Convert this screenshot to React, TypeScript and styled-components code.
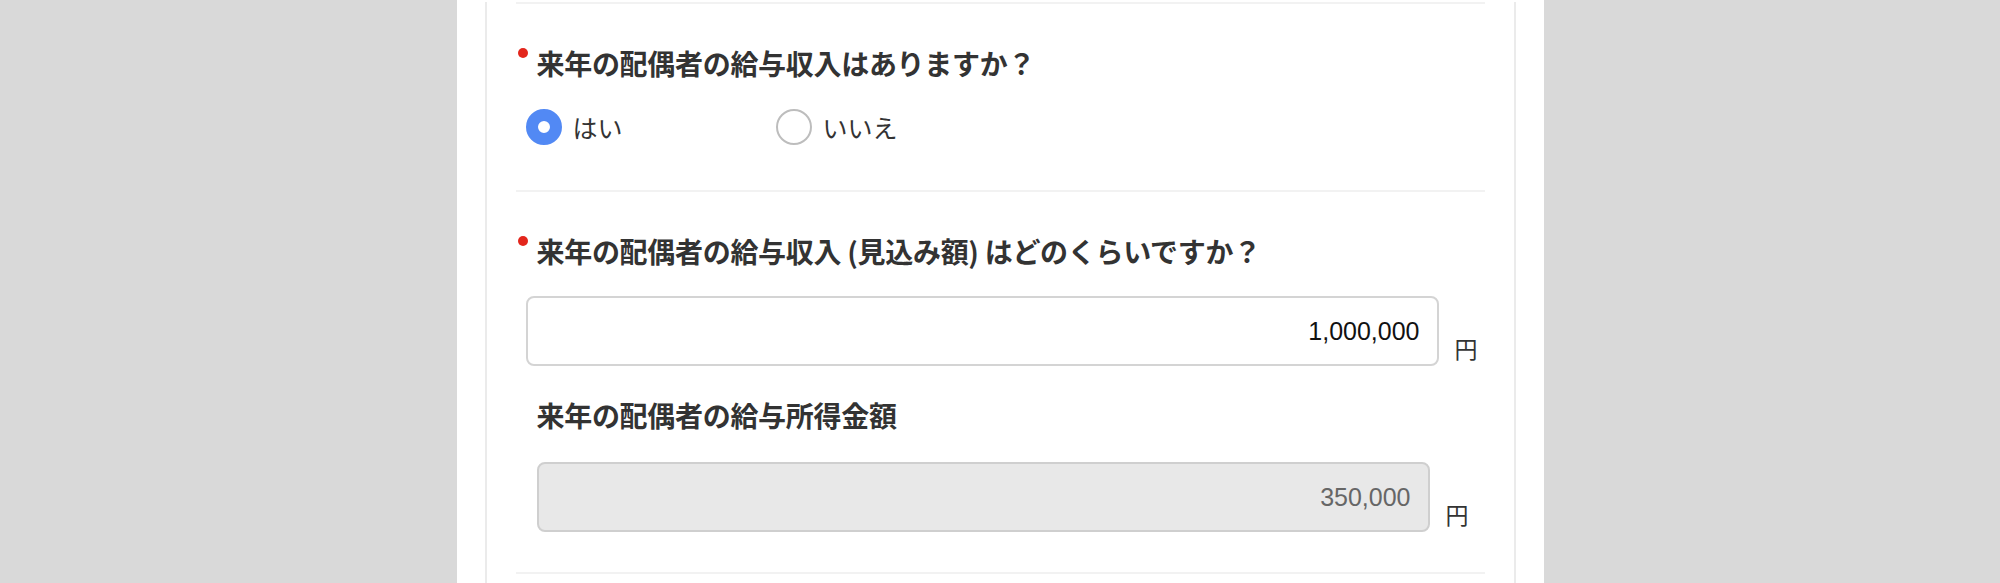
import styled, { createGlobalStyle } from "styled-components";

const GlobalStyle = createGlobalStyle`
  body {
    margin: 0;
    background: #d9d9d9;
    font-family: "Noto Sans CJK JP", "Noto Sans", sans-serif;
    color: #333;
  }
`;

const Page = styled.div`
  display: flex;
  justify-content: center;
  min-height: 583px;
`;

const Panel = styled.div`
  width: 1087px;
  box-sizing: border-box;
  background: #fff;
  padding: 0 28px;
`;

const Card = styled.div`
  border-left: 2px solid #ebebeb;
  border-right: 2px solid #ebebeb;
  padding: 0 29px;
  min-height: 583px;
`;

const Divider = styled.div<{ $top?: number }>`
  height: 2px;
  background: #f2f2f2;
  margin-top: ${(p) => p.$top ?? 0}px;
`;

const Section = styled.section<{ $bottom: number }>`
  padding: 39px 0 ${(p) => p.$bottom}px;
`;

const Title = styled.h2`
  position: relative;
  margin: 0;
  padding-left: 21px;
  font-size: 28px;
  line-height: 40px;
  font-weight: 700;
  color: #333;
  letter-spacing: -0.3px;
`;

const RequiredDot = styled.span`
  position: absolute;
  left: 2px;
  top: 5px;
  width: 10px;
  height: 10px;
  border-radius: 50%;
  background: #e3261c;
`;

const RadioRow = styled.div`
  display: flex;
  margin-top: 26px;
  padding-left: 10px;
`;

const RadioOption = styled.label`
  display: flex;
  align-items: center;
  gap: 11px;
  width: 250px;
  font-size: 25px;
  line-height: 36px;
  color: #333;
  cursor: pointer;
`;

const RadioCircle = styled.span<{ $checked?: boolean }>`
  width: 36px;
  height: 36px;
  box-sizing: border-box;
  border-radius: 50%;
  background: #fff;
  border: ${(p) => (p.$checked ? "12px solid #5289f4" : "2px solid #bdbdbd")};
  flex-shrink: 0;
`;

const FieldRow = styled.div<{ $indent?: number; $top?: number }>`
  display: flex;
  align-items: flex-end;
  gap: 16px;
  margin-top: ${(p) => p.$top ?? 25}px;
  padding-left: ${(p) => p.$indent ?? 10}px;
`;

const AmountBox = styled.div<{ $readonly?: boolean; $width: number }>`
  width: ${(p) => p.$width}px;
  height: 70px;
  box-sizing: border-box;
  border: 2px solid ${(p) => (p.$readonly ? "#cfcfcf" : "#d4d4d4")};
  border-radius: 8px;
  background: ${(p) => (p.$readonly ? "#e8e8e8" : "#fff")};
  display: flex;
  align-items: center;
  justify-content: flex-end;
  padding-right: 17px;
  font-family: "Liberation Sans", Arial, sans-serif;
  font-size: 25px;
  color: ${(p) => (p.$readonly ? "#666" : "#111")};
`;

const Unit = styled.span`
  font-size: 23px;
  line-height: 28px;
  color: #333;
  padding-bottom: 4px;
`;

const SubLabel = styled.div`
  margin-top: 29px;
  padding-left: 21px;
  font-size: 28px;
  line-height: 40px;
  font-weight: 700;
  color: #333;
  letter-spacing: -0.3px;
`;

export default function App() {
  return (
    <>
      <GlobalStyle />
      <Page>
        <Panel>
          <Card>
            <Divider $top={2} />
            <Section $bottom={45}>
              <Title>
                <RequiredDot />
                来年の配偶者の給与収入はありますか？
              </Title>
              <RadioRow>
                <RadioOption>
                  <RadioCircle $checked />
                  はい
                </RadioOption>
                <RadioOption>
                  <RadioCircle />
                  いいえ
                </RadioOption>
              </RadioRow>
            </Section>
            <Divider />
            <Section $bottom={40}>
              <Title>
                <RequiredDot />
                来年の配偶者の給与収入 (見込み額) はどのくらいですか？
              </Title>
              <FieldRow>
                <AmountBox $width={913}>1,000,000</AmountBox>
                <Unit>円</Unit>
              </FieldRow>
              <SubLabel>来年の配偶者の給与所得金額</SubLabel>
              <FieldRow $indent={21} $top={27}>
                <AmountBox $readonly $width={893}>
                  350,000
                </AmountBox>
                <Unit>円</Unit>
              </FieldRow>
            </Section>
            <Divider />
          </Card>
        </Panel>
      </Page>
    </>
  );
}
